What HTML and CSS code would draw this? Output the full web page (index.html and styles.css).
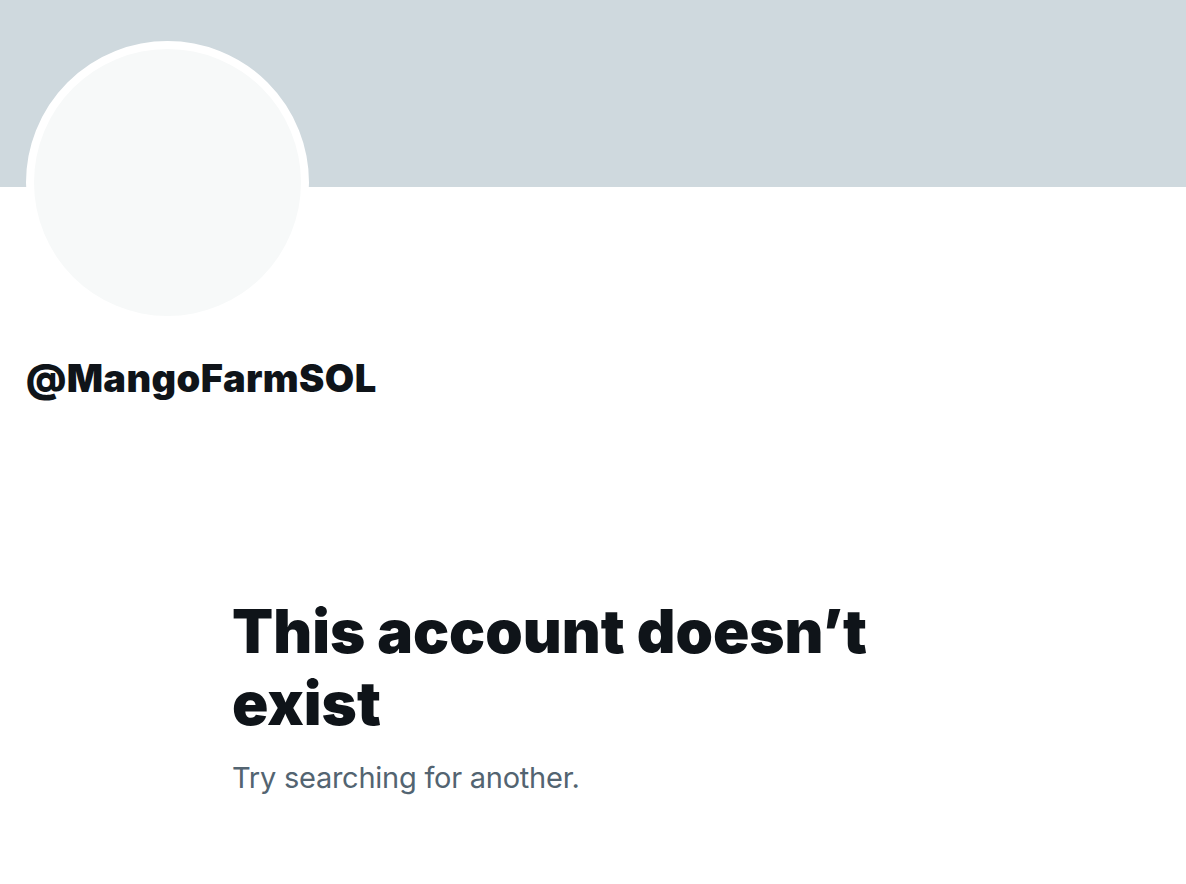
FILE: index.html
```html
<!DOCTYPE html>
<html lang="en">
<head>
<meta charset="utf-8">
<title>@MangoFarmSOL</title>
<link rel="stylesheet" href="styles.css">
</head>
<body>
<div class="page">
  <div class="banner"></div>
  <div class="profile">
    <div class="avatar"><div class="avatar-inner"></div></div>
    <div class="handle">@MangoFarmSOL</div>
  </div>
  <div class="empty">
    <h1 class="empty-title">This account doesn’t exist</h1>
    <p class="empty-sub">Try searching for another.</p>
  </div>
</div>
</body>
</html>
```
FILE: styles.css
```css
html, body {
  margin: 0;
  padding: 0;
  background: #ffffff;
}
body {
  font-family: Inter, "Noto Sans", "Liberation Sans", sans-serif;
  color: #0f1419;
}
.page {
  width: 1186px;
}
.banner {
  height: 187px;
  background: #cfd9de;
}
.profile {
  padding: 0 26px;
}
.avatar {
  width: 267px;
  height: 267px;
  margin-top: -146px;
  border: 8px solid #ffffff;
  border-radius: 50%;
  background: #ffffff;
}
.avatar-inner {
  width: 100%;
  height: 100%;
  border-radius: 50%;
  background: #f7f9f9;
}
.handle {
  margin-top: 31px;
  font-size: 38px;
  font-weight: 900;
  line-height: 46px;
  letter-spacing: 0.4px;
}
.empty {
  width: 722px;
  margin: 194px auto 0;
}
.empty-title {
  margin: 0;
  font-size: 60px;
  font-weight: 900;
  line-height: 72px;
  letter-spacing: 0;
}
.empty-sub {
  margin: 19px 0 0;
  font-size: 29px;
  line-height: 40px;
  letter-spacing: -0.25px;
  color: #536471;
}
```
